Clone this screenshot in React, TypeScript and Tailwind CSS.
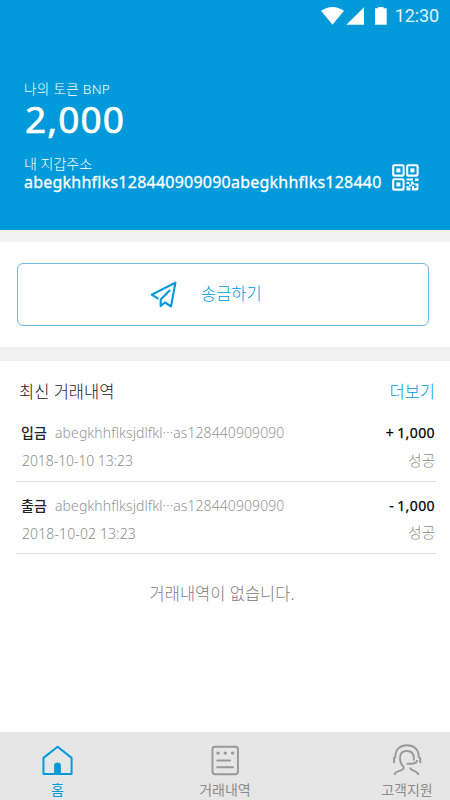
import type { ReactNode } from 'react';

type Transaction = {
  type: string;
  address: string;
  date: string;
  dateClass: string;
  sign: string;
  amount: string;
  status: string;
};

const transactions: Transaction[] = [
  {
    type: '입금',
    address: 'abegkhhflksjdlfkl···as128440909090',
    date: '2018-10-10 13:23',
    dateClass: 'tracking-[-0.07px]',
    sign: '+',
    amount: '1,000',
    status: '성공',
  },
  {
    type: '출금',
    address: 'abegkhhflksjdlfkl···as128440909090',
    date: '2018-10-02 13:23',
    dateClass: 'tracking-[0.12px]',
    sign: '-',
    amount: '1,000',
    status: '성공',
  },
];

const StatusBar = () => (
  <div className="flex h-8 items-center justify-end pr-[11px] text-white">
    <svg width="66" height="18" viewBox="321 6 66 18" fill="currentColor" className="mr-2">
      <path d="M321 9.8Q332.5 2.2 344 9.8L332.5 23.8Z" />
      <path d="M364 6.2V23.8H346.3Z" />
      <path d="M375 7.2H378V6H383.5V7.2H386.7V23.8H375Z" />
    </svg>
    <span className="font-[Roboto,sans-serif] text-[18px] leading-8 tracking-[-0.1px] text-[#e0f3fb]">12:30</span>
  </div>
);

const QrIcon = () => (
  <svg width="27" height="27" viewBox="0 0 27 27" fill="none" stroke="#fff" strokeWidth="2.1">
    <rect x="1.2" y="1.2" width="10.4" height="10.4" rx="1.2" />
    <rect x="15.2" y="1.2" width="10.4" height="10.4" rx="1.2" />
    <rect x="1.2" y="15.2" width="10.4" height="10.4" rx="1.2" />
    <g fill="#fff" stroke="none">
      <rect x="4.4" y="4.4" width="4" height="4" />
      <rect x="18.4" y="4.4" width="4" height="4" />
      <rect x="4.4" y="18.4" width="4" height="4" />
      <path d="M14.5 14.5H21V16.5H14.5ZM23 14.5H26.5V17H23ZM14.5 18H17.5V20H14.5ZM19 17.5H21.5V19.5H26.5V22H23.5V20.5H19ZM17 20.5H19.5V22.5H17ZM14.5 22H16.5V23.5H18.5V26.5H14.5ZM20 22H22V24H24.5V22.5H26.5V24.5Q26.5 26.5 24.5 26.5H20Z" />
    </g>
  </svg>
);

const SendIcon = () => (
  <svg
    width="28"
    height="28"
    viewBox="150 281 28 28"
    fill="none"
    stroke="#0099da"
    strokeWidth="2.1"
    strokeLinecap="round"
    strokeLinejoin="round"
  >
    <path d="M157.7 298.4L151.7 294.6L175.4 282.8L171 306.4L165 302.5L160.7 306V299.6L169.6 290.6" />
  </svg>
);

const HomeIcon = () => (
  <svg width="34" height="34" viewBox="41 744 34 34" fill="none" stroke="#0099da" strokeWidth="2" strokeLinejoin="round">
    <path d="M43 758.3L57.6 746.8L72 758.3V775H43Z" />
    <path d="M54 775V766.5Q54 763 57.5 763Q61 763 61 766.5V775Z" fill="#0099da" stroke="none" />
  </svg>
);

const ListIcon = () => (
  <svg width="34" height="34" viewBox="208 744 34 34" fill="none" stroke="#999" strokeWidth="2" strokeLinecap="round">
    <rect x="212.1" y="746.8" width="26.2" height="28.3" rx="2.5" />
    <path d="M217 761H230.2M217 768H233.3" />
    <g fill="#999" stroke="none">
      <circle cx="217.8" cy="753.4" r="1.8" />
      <circle cx="225.3" cy="753.4" r="1.8" />
      <circle cx="232.8" cy="753.4" r="1.8" />
    </g>
  </svg>
);

const SupportIcon = () => (
  <svg width="34" height="34" viewBox="390 744 34 34" fill="none" stroke="#999" strokeWidth="2" strokeLinejoin="round">
    <path d="M393.7 763.5V758.5L395 757.5V756.5C395 749.5 400 745.2 407 745.2S419 749.5 419 756.5V757.5L420.6 758.5V763.5" />
    <path d="M394.4 776V774.8C394.4 772 403.5 771.5 403.5 769V767.5C400.6 765 399.8 761.5 399.8 758.3C399.8 753.7 402.3 751.2 407 751.2S414 753.7 414 758.5V761" />
    <path d="M406.5 764.3H411C415 764.3 417.5 763.3 417.5 760.5M410.3 768.3C410.3 772.2 418.6 771.2 418.6 776" />
  </svg>
);

const NavItem = ({ icon, label, className }: { icon: ReactNode; label: string; className: string }) => (
  <div className={`flex flex-col items-center ${className}`}>
    {icon}
    <span className="mt-[3px] text-[14px] leading-5 whitespace-nowrap">{label}</span>
  </div>
);

const TransactionRow = ({ item }: { item: Transaction }) => (
  <li className="h-[72.5px] border-b border-[#dedede] pt-[9.5px] pr-px pl-[5px]">
    <div className="flex h-7 items-center justify-between">
      <div className="flex items-center">
        <span className="w-[34px] text-[14px] font-medium text-[#222]">{item.type}</span>
        <span className="text-[14px] font-light tracking-[0.09px] text-[#959595]">{item.address}</span>
      </div>
      <span className="flex gap-[3px] text-[14px] tracking-[0.4px] text-black [-webkit-text-stroke:0.25px_#000]">
        <span>{item.sign}</span>
        <span>{item.amount}</span>
      </span>
    </div>
    <div className="flex h-7 items-center justify-between font-light text-[#8c8c8c]">
      <span className={`pl-px text-[14px] ${item.dateClass}`}>{item.date}</span>
      <span className="text-[14.5px]">{item.status}</span>
    </div>
  </li>
);

export default function App() {
  return (
    <div className="flex h-[800px] w-[450px] flex-col overflow-hidden bg-white font-['Noto_Sans','Noto_Sans_CJK_KR',sans-serif]">
      <header className="h-[230px] bg-[#0099da] text-white">
        <StatusBar />
        <div className="pt-[47px] pl-6">
          <p className="text-[13.5px] leading-5 font-light tracking-[0.35px]">나의 토큰 BNP</p>
          <p className="h-11 pl-px text-[37px] leading-[40px] tracking-[1.1px] [-webkit-text-stroke:0.7px_#fff]">2,000</p>
          <p className="mt-[11px] text-[14px] leading-5 font-light">내 지갑주소</p>
          <div className="flex h-4 items-center">
            <p className="w-[368px] text-[16px] leading-4 tracking-[0.23px] whitespace-nowrap [-webkit-text-stroke:0.3px_#fff]">
              abegkhhflks128440909090abegkhhflks128440
            </p>
            <div className="-mt-[9px]">
              <QrIcon />
            </div>
          </div>
        </div>
      </header>

      <section className="border-y-[12px] border-b-[14px] border-[#f0f0f0] px-[17px] pt-[21px] pb-[21px]">
        <button className="flex h-[63px] w-[412px] items-center rounded-md border border-[#6fb8e2] pl-[132px] text-[#0099da]">
          <SendIcon />
          <span className="ml-[23px] text-[16.5px] font-light">송금하기</span>
        </button>
      </section>

      <main className="flex-1 pr-[14px] pl-4">
        <div className="flex h-12 items-center justify-between pt-[14px] pr-px pl-[3px] font-light">
          <h2 className="text-[16.5px] text-[#222]">최신 거래내역</h2>
          <a className="text-[16.5px] text-[#0099da]">더보기</a>
        </div>
        <ul>
          {transactions.map((item) => (
            <TransactionRow key={item.date} item={item} />
          ))}
        </ul>
        <p className="pt-7 pr-2 text-center text-[16.5px] font-light text-[#808080]">거래내역이 없습니다.</p>
      </main>

      <nav className="flex h-[68px] bg-[#e6e6e6] pt-3">
        <NavItem icon={<HomeIcon />} label="홈" className="w-[115px] text-[#0099da]" />
        <NavItem icon={<ListIcon />} label="거래내역" className="w-[220px] text-[#8c8c8c]" />
        <NavItem icon={<SupportIcon />} label="고객지원" className="ml-[29px] w-[86px] text-[#8c8c8c]" />
      </nav>
    </div>
  );
}
